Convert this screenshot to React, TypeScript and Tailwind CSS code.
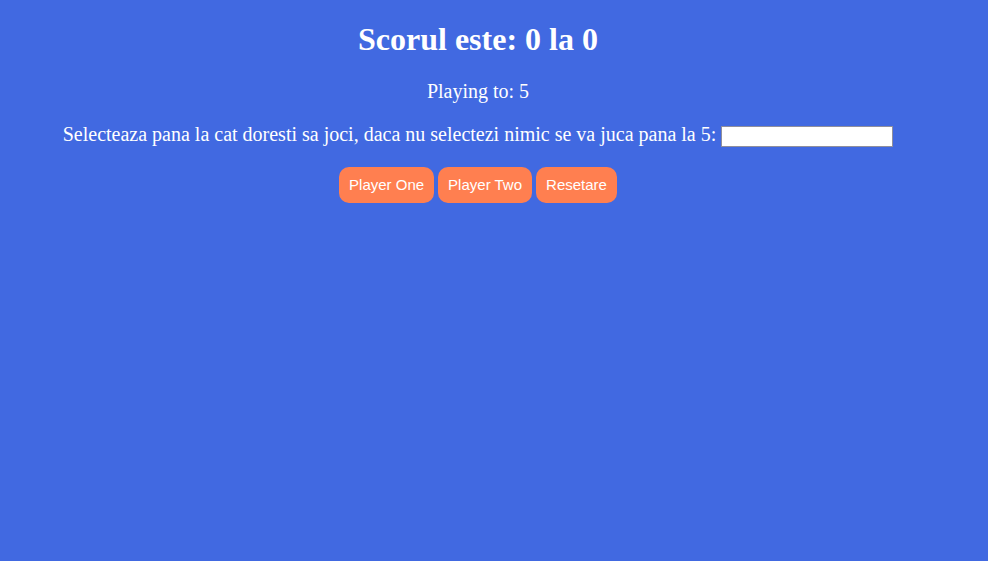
export default function App() {
  return (
    <div className="min-h-[561px] w-full bg-[#4169E1] text-white" style={{ fontFamily: '"Liberation Serif", "Times New Roman", serif' }}>
      <div className="w-[956px] flex flex-col items-center text-center">
        <h1 className="mt-[21px] text-[32px] leading-[37px] font-bold">Scorul este: 0 la 0</h1>
        <p className="mt-[22px] text-[20px] leading-[23px]">Playing to: 5</p>
        <div className="mt-[20px] flex items-start h-[23px] text-[20px] leading-[23px]">
          <span>Selecteaza pana la cat doresti sa joci, daca nu selectezi nimic se va juca pana la 5:</span>
          <input type="number" className="ml-[5px] mt-[3px] w-[172px] h-[21px] bg-white border border-[#8f8f9d] outline-none text-black text-[13px] px-[2px]" />
        </div>
        <div className="mt-[21px] flex gap-[4px]" style={{ fontFamily: '"Liberation Sans", Arial, sans-serif' }}>
          <button className="h-[36px] px-[10px] rounded-[10px] bg-[#FF7F50] text-white text-[15px]">Player One</button>
          <button className="h-[36px] px-[10px] rounded-[10px] bg-[#FF7F50] text-white text-[15px]">Player Two</button>
          <button className="h-[36px] px-[10px] rounded-[10px] bg-[#FF7F50] text-white text-[15px]">Resetare</button>
        </div>
      </div>
    </div>
  );
}
